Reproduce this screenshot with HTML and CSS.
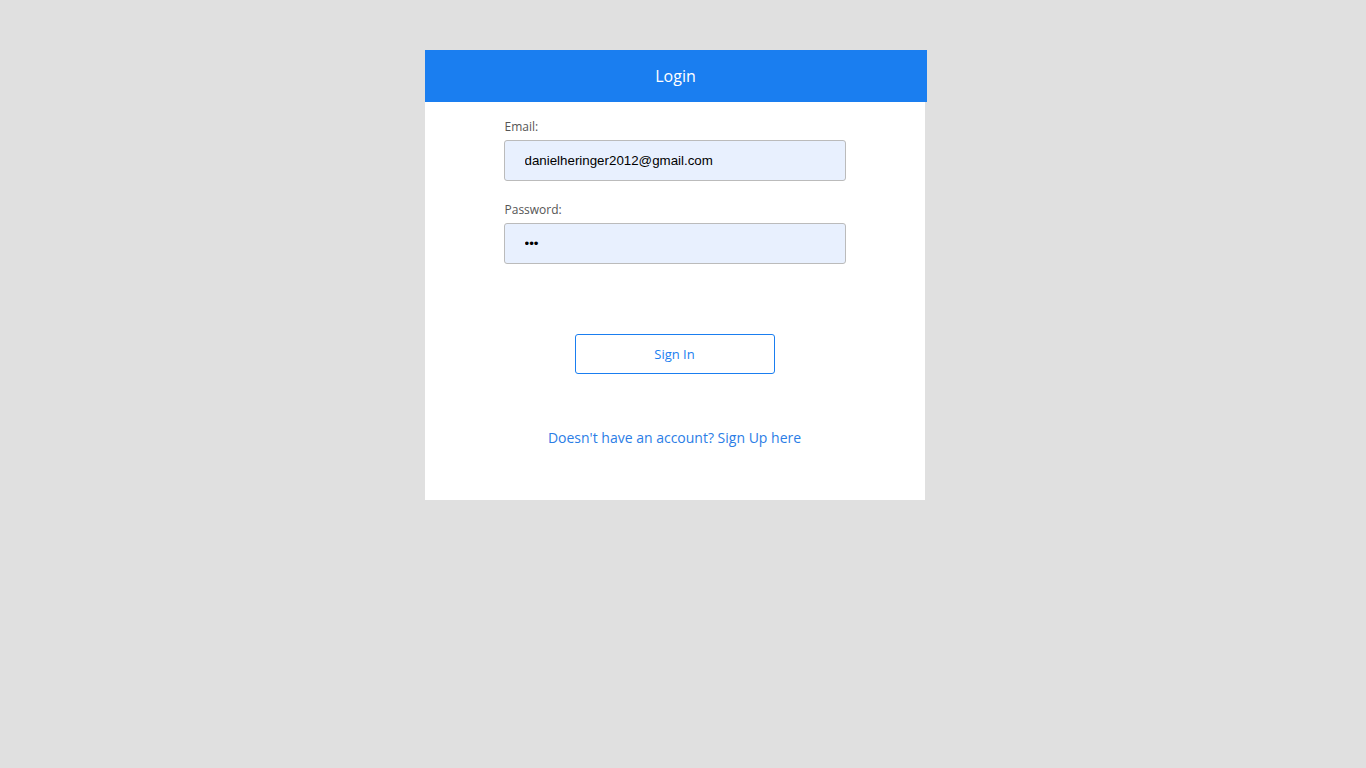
FILE: index.html
```html
<!DOCTYPE html>
<html lang="en">
<head>
<meta charset="UTF-8">
<meta name="viewport" content="width=device-width, initial-scale=1.0">
<title>Login</title>
<link rel="stylesheet" href="styles.css">
</head>
<body>

<div class="page">
    <div class="login-card">
        <div class="login-header">Login</div>

        <form class="login-form">
            <div class="field">
                <label for="email">Email:</label>
                <input type="email" id="email" name="email" value="danielheringer2012@gmail.com">
            </div>

            <div class="field">
                <label for="password">Password:</label>
                <input type="password" id="password" name="password" value="123">
            </div>

            <button type="button" class="signin-btn">Sign In</button>

            <a href="#" class="signup-link">Doesn't have an account? Sign Up here</a>
        </form>
    </div>
</div>

</body>
</html>
```

FILE: styles.css
```css
html, body {
    margin: 0;
    padding: 0;
}

body {
    background-color: #e0e0e0;
    font-family: "Open Sans", Arial, sans-serif;
}

/* width leaves room for the 17px scrollbar */
.page {
    width: 1349px;
    padding: 50px 0 369px;
}

.login-card {
    width: 500px;
    margin: 0 auto;
    background-color: #fff;
}

.login-header {
    height: 52px;
    line-height: 52px;
    margin-right: -2px;
    background-color: #1a7ef0;
    color: #fff;
    font-size: 16px;
    text-align: center;
}

.login-form {
    display: flex;
    flex-direction: column;
    align-items: center;
    padding: 17px 0 52px;
}

.field {
    width: 342px;
    margin-bottom: 21px;
}

.field label {
    display: block;
    height: 16px;
    line-height: 16px;
    margin-bottom: 5px;
    padding-left: 1px;
    font-size: 12px;
    color: #555;
}

.field input {
    box-sizing: border-box;
    width: 100%;
    height: 41px;
    padding: 0 20px;
    border: 1px solid #bbb;
    border-radius: 3px;
    background-color: #e8f0fe;
    font-family: "Liberation Sans", Arial, sans-serif;
    font-size: 13.33px;
    color: #000;
    outline: none;
}

.signin-btn {
    width: 200px;
    height: 40px;
    margin-top: 49px;
    background-color: #fff;
    border: 1px solid #1a7ef0;
    border-radius: 3px;
    color: #1a7ef0;
    font-family: "Open Sans", Arial, sans-serif;
    font-size: 13px;
    cursor: pointer;
}

.signup-link {
    display: block;
    margin-top: 54px;
    line-height: 20px;
    font-size: 14px;
    color: #2b7de6;
    text-decoration: none;
}
```
